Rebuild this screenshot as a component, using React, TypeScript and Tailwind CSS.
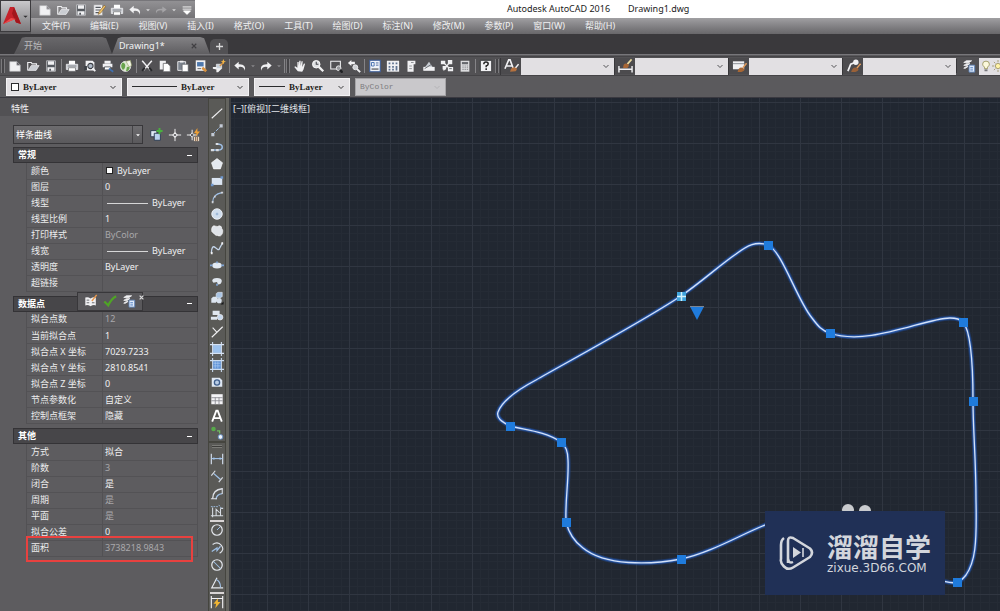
import React from "react";

const UI = "font-['Noto_Sans','Noto_Sans_CJK_SC',sans-serif]";

const W = "#f1f1f3";
const B = "#9fc0e6";
const O = "#d9923e";

const glyphs: Record<string, React.ReactNode> = {
  new: <path d="M2 3h8l4 4v7H2z M10 3v4h4" fill={W} stroke="#b9b9bd" strokeWidth=".7" />,
  open: (
    <>
      <path d="M2 13V4h4l1 1.500h5V7" fill="none" stroke={W} strokeWidth="1.300" />
      <path d="M2.500 13L6 7.500h9L11.500 13z" fill="#c9ccd2" stroke={W} strokeWidth=".8" />
    </>
  ),
  save: (
    <>
      <path d="M3 2h10v12H3z" fill="#55595f" stroke="#d9d9dc" strokeWidth=".8" />
      <path d="M4.500 2.500h7v4h-7z M4 9.500h8v4H4z" fill={W} />
      <path d="M6 11h2v2.500H6z" fill="#55595f" />
    </>
  ),
  saveas: (
    <>
      <path d="M2 2h10v12H2z" fill={W} stroke="#8d8d90" strokeWidth=".6" />
      <path d="M4 5h6M4 8h6M4 11h5" stroke="#55595f" strokeWidth="1.200" />
      <path d="M14 2.500L8 10l-1 3 3-1.500L15.500 4z" fill="#efc36a" stroke="#79531f" strokeWidth=".6" />
    </>
  ),
  print: (
    <>
      <path d="M4.500 2h7v4h-7z" fill="#fff" />
      <path d="M1.500 6h13v6h-13z" fill="#d4d7dc" stroke={W} strokeWidth=".8" />
      <path d="M4 10h8v4H4z" fill="#fff" stroke="#6b6b6f" strokeWidth=".8" />
      <path d="M3 8h10" stroke="#6b7077" />
    </>
  ),
  preview: (
    <>
      <path d="M3 2h8l2 2v9H3z" fill={W} />
      <circle cx="8.500" cy="8" r="3" fill="#aeb8c5" stroke="#3d4046" strokeWidth="1.200" />
      <path d="M11 10.500l3 3.500" stroke={W} strokeWidth="2" />
      <path d="M1.500 8h3v5h-3z" fill="#3d4046" />
    </>
  ),
  publish: (
    <>
      <path d="M4 2h7v3H4z M2 5.500h11v4H2z" fill={W} />
      <path d="M4 9h7v3.500H4z" fill="#fff" stroke="#55595f" />
      <path d="M9 11l5 3.500" stroke="#3f6fae" strokeWidth="2" />
    </>
  ),
  globe: (
    <>
      <circle cx="7.500" cy="8.500" r="5.800" fill="#dbe8cf" stroke={W} strokeWidth=".8" />
      <path d="M4 4q4 1 3 5t-3 3q-3-4 0-8z M9 9q4-1 3 2t-4 3z" fill="#68a34c" />
      <path d="M8 2.500l5-1 1.500 6-3 1.500z" fill="#f4f4ea" stroke="#83924d" strokeWidth=".6" />
    </>
  ),
  cut: (
    <>
      <path d="M2.500 2L12 13M13.500 2L4 13" stroke={W} strokeWidth="1.700" />
      <path d="M2.500 13.500l3-3.500M13.500 13.500l-3-3.500" stroke="#26272a" strokeWidth="2.200" />
    </>
  ),
  copy: (
    <>
      <path d="M2 2h7v10H2z" fill={W} />
      <path d="M6 5h5l3 3v6.500H6z" fill="#fff" stroke="#66666a" strokeWidth=".9" />
    </>
  ),
  paste: (
    <>
      <path d="M2 3h9v10H2z" fill="#7d848e" stroke={W} />
      <path d="M4.500 2h4v2h-4z" fill={W} />
      <path d="M7 6h7v8.500H7z" fill="#fff" stroke="#55595f" strokeWidth=".8" />
    </>
  ),
  match: (
    <>
      <path d="M2 1.500h11v12H2z" fill={W} />
      <path d="M3.500 3.500H11v5H3.500z" fill="#4d78ad" />
      <path d="M9.500 10l4.500 4" stroke={O} strokeWidth="3" />
      <path d="M4 11h4" stroke="#55595f" />
    </>
  ),
  block: (
    <>
      <path d="M1 9h7l3 2-4 4H5v-3L1 11z" fill={W} />
      <path d="M5 6h6v5H5z" fill="#c7d0db" stroke={W} strokeWidth=".8" />
      <path d="M9 8l4-4" stroke={O} strokeWidth="1.600" />
      <path d="M13 0l.9 2.200L16 3l-2.100.8L13 6l-.9-2.200L10 3l2.100-.8z" fill="#f2b646" />
    </>
  ),
  undo: <path d="M6.500 3L1.500 7.500 6.500 12V9q6-1 7 4.500Q15.500 5.500 6.500 6z" fill={W} />,
  redo: <path d="M9.500 3l5 4.500-5 4.500V9q-6-1-7 4.500Q.5 5.500 9.500 6z" fill={W} />,
  redoDim: <path d="M9.500 4l5 3.500-5 3.500V8.500q-6-1-7 3.500Q.5 6 9.500 6.500z" fill="#a5a4a7" />,
  hand: <path d="M5.500 14L1.500 9l1-.8L5 10V3.500h1.500V8l.7-6h1.500v6l1-5.500 1.400.2L10.500 9l2-4 1.300.5L12 12l-1.500 2.500z" fill={W} />,
  zoomTime: (
    <>
      <circle cx="6" cy="6" r="4.300" fill="#dfe1e4" stroke="#fff" />
      <path d="M6 3v3h2.500" stroke="#44464b" fill="none" strokeWidth="1.200" />
      <path d="M9 9l5 5" stroke={W} strokeWidth="2.600" />
    </>
  ),
  zoomWin: (
    <>
      <path d="M2 2.500h11v9H2z" fill="none" stroke={W} strokeWidth="1.200" />
      <circle cx="11" cy="10.500" r="2.700" fill="#9a9b9f" stroke={W} />
      <path d="M12.500 12.500l3 3" stroke="#1f2023" strokeWidth="2.800" />
    </>
  ),
  zoomPrev: (
    <>
      <path d="M1 4.500L5 1v2h4v3H5v2z" fill={W} />
      <circle cx="9.500" cy="9.500" r="2.800" fill="#cfd1d5" stroke={W} />
      <path d="M11.500 11.500l3.500 3.500" stroke={W} strokeWidth="2.200" />
    </>
  ),
  props: (
    <>
      <path d="M2 1.500h12v13H2z" fill="#f0f4fa" stroke="#3b5c99" strokeWidth="1.200" />
      <path d="M4 4h3v4H4z" fill="none" stroke="#3e69ad" />
      <path d="M9 4.500h3M9 7h3" stroke="#3b5c99" />
      <path d="M4 11.500h8" stroke="#5f6165" strokeWidth="1.500" />
    </>
  ),
  design: (
    <>
      <path d="M1 2h14v12.500H1z" fill={W} />
      <path d="M3 4h2v2H3zM7 4h2v2H7zM11 4h2v2h-2zM3 8h2v2H3zM3 11h2v2H3zM7 8h2v2H7zM7 11h2v2H7zM11 8h2v5h-2z" fill="#5f7391" />
    </>
  ),
  palettes: (
    <>
      <path d="M4 2h9v4H4zM4 6h7v8.500H4z" fill={W} />
      <path d="M8 4h3M6 8h3M6 11h3" stroke="#85878c" />
    </>
  ),
  sheet: (
    <>
      <path d="M1.500 12L8 3l6 9z" fill="#c8ccd2" />
      <path d="M1.500 9h13v4.500h-13z" fill={W} />
      <path d="M3 11l8-5" stroke="#606268" />
    </>
  ),
  markup: (
    <>
      <path d="M1 2h5v4H1zM9 1h5v5H9zM3 8h4v4H3zM9 9h6v5H9z" fill={W} />
      <path d="M10.500 11h3" stroke="#606268" />
      <path d="M5 5l5 5M10 5L4 13" stroke={W} strokeWidth="1.500" />
    </>
  ),
  calc: (
    <>
      <path d="M3 2h10v12.500H3z" fill="#dcdcde" />
      <path d="M4.500 3.500h7v2.500h-7z" fill="#66686d" />
      <path d="M5 8h1.500M7.500 8H9M10 8h1.500M5 10h1.500M7.500 10H9M10 10h1.500M5 12h1.500M7.500 12H9M10 12h1.500" stroke="#85878c" />
    </>
  ),
  help: (
    <>
      <path d="M1.500 1.500h13v13h-13z" fill={W} stroke="#303134" />
      <path d="M5.500 6q0-2.500 2.500-2.500T10.500 5.700Q10.500 7 8.200 8v1.500M8.200 10.500v2" fill="none" stroke="#222" strokeWidth="1.700" />
    </>
  ),
  textStyle: (
    <>
      <path d="M1 11L5 1.500h1.500L10 11M3 8h5.500" fill="none" stroke={W} strokeWidth="1.700" />
      <path d="M15.500 6l-4 5" stroke={W} strokeWidth="1.500" />
      <path d="M6.500 14q1-5 5-4.500t1 4z" fill="#b4713f" />
    </>
  ),
  dimStyle: (
    <>
      <path d="M1 8v7M15 8v7M1 11.500h14" stroke={W} strokeWidth="1.500" />
      <path d="M14.500 1L10 6" stroke="#e8d9a0" strokeWidth="1.800" />
      <path d="M5.500 10q0-5.500 4-4.500t.5 4.500z" fill="#a86735" />
    </>
  ),
  tableStyle: (
    <>
      <path d="M1 3h12v8.500H1z" fill={W} />
      <path d="M1 5.500h12" stroke="#8a8d93" />
      <path d="M15.500 5l-4 5" stroke="#e09a5c" strokeWidth="1.700" />
      <path d="M6 14.500q1-6 5.500-4.500T10 14.500z" fill="#a86735" />
    </>
  ),
  leaderStyle: (
    <>
      <path d="M2 13.500L5 6l5-2" fill="none" stroke={W} strokeWidth="1.800" />
      <circle cx="10.500" cy="4" r="2.900" fill={W} />
      <path d="M15.500 5.500l-4 5" stroke="#e09a5c" strokeWidth="1.600" />
      <path d="M5.500 14.500q1.500-6 6-4.500T10 14.500z" fill="#9a6138" />
    </>
  ),
  layers: (
    <>
      <path d="M2 4l3-2h6L8 4zM2 7.300l3-2h4l-3 2zM2 10.500l3-2h2l-3 2z" fill={W} stroke={W} strokeWidth=".9" />
      <path d="M8 7h6.500v8H8z" fill="#dfeafa" stroke="#5c80b5" />
      <path d="M9.500 10h3M9.500 12.500h3" stroke="#3b6fb9" />
    </>
  ),
  line: <path d="M2 14L14 3" stroke={W} strokeWidth="1.300" />,
  xline: (
    <>
      <path d="M3 13L13 3" stroke={B} strokeWidth="1.100" strokeDasharray="4 1.500" />
      <path d="M1.500 11.500h3.500V15H1.500zM11 1.500h3.500V5H11z" fill="#c3cad5" />
    </>
  ),
  pline: (
    <>
      <path d="M1.500 11.500H9M8 4.500q6 0 6 3.500t-4.500 3.500" fill="none" stroke={B} strokeWidth="1.700" />
      <path d="M1 10.300h3.500v2.500H1zM6.500 3.300h3v2.500h-3zM7 10.300h3v2.500H7z" fill="#d9dde3" />
    </>
  ),
  polygon: <path d="M8 1.800l6.300 4.800-2.400 7H4.100l-2.400-7z" fill="#e4e9ef" stroke="#fff" strokeWidth=".7" />,
  rect: (
    <>
      <path d="M2 4.500h12v8H2z" fill="#dbe5f1" />
      <path d="M1 11h3v3H1zM12 2.500h3v3h-3z" fill="#6f98ce" />
    </>
  ),
  arc: (
    <>
      <path d="M3 14Q3 5 13.500 3" fill="none" stroke={B} strokeWidth="1.300" />
      <path d="M2 12.500h2V15H2zM12.500 2H15v2h-2.500zM4.500 6.500h2v2h-2z" fill="#d0d4db" />
    </>
  ),
  circle: (
    <>
      <circle cx="8" cy="8" r="6" fill="#cfdded" stroke="#f3f6fa" />
      <path d="M6.500 8h3M8 6.500v3" stroke="#8aa9cf" />
    </>
  ),
  cloud: <path d="M2.500 3.500Q4 1 6.500 2.500q2 1 4-.5 3 0 3 3.500 1.500 1 1 4-.5 3-2.500 4-2 .5-3.500-.5-1.500.5-3-1T2 8.500q-.5-3 .5-5z" fill="#dfe3e8" stroke="#fff" strokeWidth=".7" />,
  spline: (
    <>
      <path d="M1.500 14Q2 4 6 7.500t4.500 2T14.500 2" fill="none" stroke="#c4d5ea" strokeWidth="1.500" />
      <path d="M1 12.500h2V15H1zM13 1.500h2V4h-2z" fill={W} />
    </>
  ),
  ellipse: (
    <>
      <ellipse cx="8" cy="8.500" rx="5.500" ry="3.400" fill="#e1e9f2" />
      <path d="M0 7.500h3v2H0zM13 7.500h3v2h-3zM7 4h2v2H7z" fill="#80a4d4" />
    </>
  ),
  ellArc: (
    <>
      <path d="M2.500 8q0-3.500 5.500-3.500t5.500 3.500Q13 12 9 12l-1-3-4 1z" fill="#dfe6ee" />
      <path d="M7 11h2v2.500H7z" fill="#7ba2d3" />
    </>
  ),
  insert: (
    <>
      <path d="M1.500 8.500l2-2h5v5l-2 2h-5z" fill="#dce5ef" />
      <path d="M7 3l2-1.500h5V6l-2 2H7z" fill="#a9c4e3" stroke={W} strokeWidth=".6" />
      <circle cx="10.500" cy="11" r="2.900" fill="#d8e1ec" />
      <path d="M12 15.500h3.500V12z" fill="#17181a" />
    </>
  ),
  makeBlock: (
    <>
      <path d="M3 3h8v5H3zM1 10h7v3.500H1z" fill="#dfe6ee" />
      <circle cx="11.500" cy="10.500" r="3.200" fill="#c5d7ec" stroke={W} strokeWidth=".8" />
    </>
  ),
  point: <path d="M3 3l5 5.500M14.500 2L2 14" fill="none" stroke={W} strokeWidth="1.200" />,
  hatch: (
    <>
      <path d="M3.500 3.500h9v9h-9z" fill="#9cc2ee" />
      <path d="M3 0v16M13 0v16M0 3h16M0 13h16" stroke="#d6e3f4" strokeWidth="1.200" />
    </>
  ),
  gradient: (
    <>
      <path d="M3.500 3.500h9v9h-9z" fill="#5e93d8" />
      <path d="M3 0v16M13 0v16M0 3h16M0 13h16" stroke="#c9dbf0" strokeWidth="1.200" />
      <path d="M6 4v8M9 4v8M4 6h8M4 9h8" stroke="#b2cff2" strokeWidth=".7" />
    </>
  ),
  region: (
    <>
      <path d="M2 3h9l3 3v7.500H2z" fill="#dfe8f3" />
      <circle cx="8" cy="8.500" r="3" fill="#b9cde6" stroke="#3f5f8c" strokeWidth="1.500" />
    </>
  ),
  table: (
    <>
      <path d="M1.500 2.500h13v11.500h-13z" fill="#f3f3f5" />
      <path d="M1.500 6.500h13M1.500 10h13M6 6v8M10.300 6v8" stroke="#8b8d92" />
    </>
  ),
  mtext: <path d="M2.500 14.500L7.200 2h1.600L13.500 14.500M4.500 10.500h7" fill="none" stroke="#fff" strokeWidth="2.100" />,
  addSel: (
    <>
      <circle cx="4" cy="3.500" r="2.600" fill="#57a94a" />
      <path d="M8 5.500h3v3" fill="none" stroke="#70b861" strokeWidth="1.500" />
      <circle cx="12" cy="12.500" r="2.700" fill="#eef3fa" stroke="#5b86bf" />
    </>
  ),
  dimLin: (
    <>
      <path d="M1.500 2v12M14.500 2v12" stroke="#d5e0ee" strokeWidth="1.300" />
      <path d="M2 7.500h12" stroke={B} strokeWidth="1.300" />
      <path d="M2 7.500l3-1.500v3zM14 7.500l-3-1.500v3z" fill={B} />
    </>
  ),
  dimAli: (
    <>
      <path d="M4 5l8 7" stroke={B} strokeWidth="1.500" />
      <path d="M1.500 7.500L6 2M10 15l4.500-5.500" stroke="#d9dde3" strokeWidth="1.300" />
    </>
  ),
  dimArc: (
    <>
      <path d="M3 13.500Q3 3 14 2" fill="none" stroke="#dde1e7" strokeWidth="1.500" />
      <path d="M7 14q0-5.500 7-6.500" fill="none" stroke={B} strokeWidth="1.500" />
      <path d="M1 13.500h7M14 1v7" stroke="#dde1e7" strokeWidth="1.200" />
    </>
  ),
  dimOrd: (
    <>
      <path d="M3 4v11M1 13.500h14M7 13V6l4 4M12 5v8M12 5h3" fill="none" stroke="#d8dde4" strokeWidth="1.200" />
      <path d="M1 3h8M10 1l3 4" fill="none" stroke={B} strokeDasharray="2 1" />
    </>
  ),
  dimRad: (
    <>
      <circle cx="8" cy="8" r="6" fill="none" stroke="#e4e7ec" strokeWidth="1.400" />
      <path d="M8 8l3.500-3.500" stroke={B} strokeWidth="1.100" />
    </>
  ),
  dimJog: (
    <>
      <path d="M3 4q6-4 10 1t-2 9" fill="none" stroke="#e1e5eb" strokeWidth="1.300" />
      <path d="M2 12l6-4v3l4-5" fill="none" stroke={B} strokeWidth="1.400" />
    </>
  ),
  dimDia: (
    <>
      <circle cx="8" cy="8" r="6" fill="none" stroke="#e4e7ec" strokeWidth="1.400" />
      <path d="M4 4l8 8" stroke={B} strokeWidth="1.200" />
    </>
  ),
  dimAng: (
    <>
      <path d="M8 2L2 13.500h13" fill="none" stroke="#e4e7ec" strokeWidth="1.400" />
      <path d="M7 4q5 2 5 9" fill="none" stroke={B} strokeWidth="1.400" />
    </>
  ),
  dimQuick: (
    <>
      <path d="M1.500 1v14M14.500 1v14M2 4h12" stroke={W} strokeWidth="1.300" />
      <path d="M9 4L4 10h3l-1 5 6-7H9z" fill="#f2b632" />
    </>
  ),
  pickAdd: (
    <>
      <path d="M2 3h7v7H2z" fill="#dfe9f5" stroke="#26364d" />
      <path d="M6 6h7v8H6z" fill="#b9d2ef" stroke="#26364d" />
      <path d="M12 0v7M8.500 3.500h7" stroke="#49b13e" strokeWidth="2.200" />
    </>
  ),
  pick: (
    <>
      <path d="M8 1v14M1 8h14" stroke={W} strokeWidth="1.100" />
      <path d="M5.500 8L8 5.500 10.500 8 8 10.500z" fill="#5d5c5f" stroke={W} strokeWidth="1.200" />
    </>
  ),
  quickSel: (
    <>
      <path d="M7 2v12M1 8h12" stroke={W} strokeWidth="1.100" />
      <path d="M4.500 8L7 5.500 9.500 8 7 10.500z" fill="#5d5c5f" stroke={W} />
      <path d="M13 0L9 6h3l-1 4 5-6h-3z" fill="#f1a033" />
      <path d="M9 10h6v5H9z" fill="#e9d8c4" />
      <path d="M11 10v5M13 10v5" stroke="#77553a" />
    </>
  ),
  book: (
    <>
      <path d="M1.500 4q3-1 6 1v9q-3-2-6-1zM7.500 5q3-2 6-1v9q-3-1-6 1z" fill={W} />
      <path d="M3 7h3M3 10h3M9 10h3" stroke="#5a5c61" />
      <path d="M14.500 1L9 8" stroke="#e8984e" strokeWidth="1.700" />
    </>
  ),
  check: <path d="M1.500 8.500L6 13q3-7 9-10.500" fill="none" stroke="#4fa426" strokeWidth="2.500" />,
  chev: <path d="M3 6l5 5 5-5" fill="none" stroke="currentColor" strokeWidth="1.700" />,
  drop: <path d="M3 6h10l-5 5z" fill="currentColor" />,
  bars: <path d="M3 4.500h10M3 7h10M4 9h8l-4 4z" fill="#fff" stroke="#fff" strokeWidth="1" />,
  bulb: (
    <>
      <path d="M8 1.500q4.500 0 4.500 4 0 2-2.500 4v2H6v-2q-2.500-2-2.500-4 0-4 4.500-4z" fill="#fbf9dc" stroke="#8f8a4d" />
      <path d="M6 12.500h4v2.500H6z" fill="#77777b" />
    </>
  ),
  sun: (
    <>
      <circle cx="8" cy="8" r="3.500" fill="#fff3a8" stroke="#94895a" />
      <path d="M8 0v3M8 13v3M0 8h3M13 8h3M2.500 2.500l2 2M13.500 2.500l-2 2M2.500 13.500l2-2M13.500 13.500l-2-2" stroke="#94895a" />
    </>
  ),
};

function Glyph({ name, className = "size-[14px]" }: { name: string; className?: string }) {
  return (
    <svg viewBox="0 0 16 16" className={`shrink-0 ${className}`} aria-hidden="true">
      {glyphs[name]}
    </svg>
  );
}

function Tool({ name }: { name: string }) {
  return (
    <button type="button" aria-label={name} className="flex h-4 w-[18px] shrink-0 items-center justify-center">
      <Glyph name={name} />
    </button>
  );
}

function Drop({ dim }: { dim?: boolean }) {
  return (
    <button
      type="button"
      aria-label="more"
      className={`flex h-4 w-2 shrink-0 items-center justify-center ${dim ? "text-[#88878a]" : "text-[#d8d8da]"}`}
    >
      <Glyph name="drop" className="size-[6px]" />
    </button>
  );
}

const Sep = () => <span className="mx-px h-[14px] w-px shrink-0 bg-[#858487]" />;

function Grip() {
  return <span className="mr-px h-[14px] w-1 shrink-0 border-x border-[#7b7a7d] bg-[#454447]" />;
}

const menus = [
  "文件(F)", "编辑(E)", "视图(V)", "插入(I)", "格式(O)", "工具(T)",
  "绘图(D)", "标注(N)", "修改(M)", "参数(P)", "窗口(W)", "帮助(H)",
];

function Header() {
  return (
    <header className="flex h-[34px] shrink-0">
      <button
        type="button"
        aria-label="应用程序"
        className="flex h-8 w-[31px] shrink-0 items-center justify-center border border-[#3c3b3e] bg-linear-to-b from-[#c9c8cb] to-[#7c7b7e] text-[#2f2e31]"
      >
        <svg viewBox="0 0 20 22" className="h-[22px] w-5" aria-hidden="true">
          <path d="M1 19L8 2h4l7 17-5-1.500L12.500 14 6 17z" fill="#c5222a" />
          <path d="M12 2l7 17-5-1.500-4-9z" fill="#a3161c" />
          <path d="M1 19l8-6 5 1-8 3z" fill="#ee4b4b" />
        </svg>
        <Glyph name="drop" className="size-[7px]" />
      </button>
      <div className="flex min-w-0 flex-1 flex-col">
        <div className="flex h-[18px] bg-white">
          <div className="flex w-[164px] shrink-0 items-center border-t border-[#77767a] bg-linear-to-b from-[#929194] to-[#747376] pl-[5px]">
            <Tool name="new" />
            <Tool name="open" />
            <Tool name="save" />
            <Tool name="saveas" />
            <Tool name="print" />
            <Tool name="undo" />
            <Drop />
            <Tool name="redoDim" />
            <Drop />
            <Tool name="bars" />
          </div>
          <h1 className="flex flex-1 items-center gap-[18px] pl-[312px] text-[9px] whitespace-nowrap text-[#1b1b1b]">
            <span>Autodesk AutoCAD 2016</span>
            <span>Drawing1.dwg</span>
          </h1>
        </div>
        <nav className="flex h-4 items-center gap-5 bg-linear-to-b from-[#a09fa2] to-[#68676a] pl-[11px] text-[9px] whitespace-nowrap text-[#f0f0f1]">
          {menus.map((m) => (
            <button key={m} type="button">
              {m}
            </button>
          ))}
        </nav>
      </div>
    </header>
  );
}

function Tabs() {
  return (
    <div className="flex h-5 shrink-0 items-end bg-[#3a393c] pl-[14px] text-[9px]">
      <button
        type="button"
        className="h-[17px] w-[98px] bg-linear-to-b from-[#69686b] to-[#555457] pl-[10px] text-left text-[#b9b9bb] [clip-path:polygon(0_100%,4%_55%,8%_5%,12%_0,90%_0,94%_8%,100%_100%)]"
      >
        开始
      </button>
      <div className="flex h-[17px] w-[98px] items-center justify-between bg-linear-to-b from-[#838285] to-[#5f5e61] pr-[13px] pl-[7px] text-[#f4f4f5] [clip-path:polygon(0_100%,6%_8%,10%_0,90%_0,94%_8%,100%_100%)]">
        <button type="button">Drawing1*</button>
        <button type="button" aria-label="关闭" className="text-[#403f42]">
          <svg viewBox="0 0 8 8" className="size-[6px]" aria-hidden="true">
            <path d="M1 1l6 6M7 1L1 7" stroke="currentColor" strokeWidth="1.500" />
          </svg>
        </button>
      </div>
      <button
        type="button"
        aria-label="新建"
        className="flex h-[15px] w-[18px] items-center justify-center rounded-t-[5px] bg-[#525154] text-[#d8d8d9]"
      >
        <svg viewBox="0 0 8 8" className="size-[7px]" aria-hidden="true">
          <path d="M4 0v8M0 4h8" stroke="currentColor" strokeWidth="1.500" />
        </svg>
      </button>
    </div>
  );
}

function StyleCombo({ icon, label }: { icon: string; label: string }) {
  return (
    <div className="flex w-[114px] shrink-0 items-center border-l border-[#38373a]">
      <span className="flex w-5 items-center justify-center bg-[#4c4b4e]">
        <Glyph name={icon} className="h-4 w-[15px]" />
      </span>
      <span className="flex h-[17px] flex-1 items-center bg-[#e2e0e3] pr-1 text-[#3b3b3d]">
        <select className="w-full min-w-0 appearance-none bg-transparent outline-none" aria-label={label} />
        <Glyph name="chev" className="size-2" />
      </span>
    </div>
  );
}

function LayerCombo({
  label, value, width, sample, dim,
}: { label: string; value: string; width: string; sample?: React.ReactNode; dim?: boolean }) {
  return (
    <div
      className={`flex h-[18px] shrink-0 items-center gap-1 border px-1 ${width} ${
        dim ? "border-[#a6a5a8] bg-[#c9c8cb] text-[#7d7c7f]" : "border-[#f3f2f4] bg-[#e2e0e3] text-[#1e1e20]"
      }`}
    >
      {sample}
      <select
        aria-label={label}
        disabled={dim}
        className={`h-4 min-w-0 flex-1 appearance-none bg-transparent leading-4 opacity-100 outline-none ${
          dim ? "font-['Liberation_Mono',monospace] text-[8px]" : "font-['Liberation_Serif',serif] text-[9px] font-bold"
        }`}
      >
        <option>{value}</option>
      </select>
      <Glyph name="chev" className={dim ? "size-2 opacity-30" : "size-2"} />
    </div>
  );
}

function Toolbars() {
  return (
    <div className="flex shrink-0 flex-col overflow-hidden border-t border-[#77767a] bg-[#5b5a5d] pt-px">
      <div className="flex h-5 items-center border-y border-[#454447] bg-[#525154] pl-px">
        <Grip />
        <Tool name="new" /><Tool name="open" /><Tool name="save" />
        <Sep />
        <Tool name="print" /><Tool name="preview" /><Tool name="publish" /><Tool name="globe" />
        <Sep />
        <Tool name="cut" /><Tool name="copy" /><Tool name="paste" /><Tool name="match" /><Tool name="block" />
        <Sep />
        <Tool name="undo" /><Drop dim /><Tool name="redo" /><Drop dim />
        <Sep /><Grip />
        <Tool name="hand" /><Tool name="zoomTime" /><Tool name="zoomWin" /><Tool name="zoomPrev" />
        <Sep />
        <Tool name="props" /><Tool name="design" /><Tool name="palettes" /><Tool name="sheet" />
        <Tool name="markup" /><Tool name="calc" />
        <Sep />
        <Tool name="help" />
        <Grip />
        <StyleCombo icon="textStyle" label="文字样式" />
        <StyleCombo icon="dimStyle" label="标注样式" />
        <StyleCombo icon="tableStyle" label="表格样式" />
        <StyleCombo icon="leaderStyle" label="多重引线样式" />
        <span className="flex w-[23px] shrink-0 items-center justify-end border-l border-[#38373a] pr-[3px]">
          <Glyph name="layers" />
        </span>
        <span className="flex h-[17px] min-w-5 flex-1 items-center overflow-hidden bg-[#e2e0e3] pl-px">
          <Glyph name="bulb" className="size-3" />
          <Glyph name="sun" className="size-3" />
        </span>
      </div>
      <div className="flex h-[22px] items-center gap-[5px] border-b border-[#3a3940] pl-[6px]">
        <LayerCombo
          label="颜色"
          value="ByLayer"
          width="w-[116px]"
          sample={<span className="size-2 shrink-0 border border-[#2b2b2d] bg-white" />}
        />
        <LayerCombo
          label="线型"
          value="ByLayer"
          width="w-[122px]"
          sample={<span className="h-px w-[45px] shrink-0 bg-[#2b2b2d]" />}
        />
        <LayerCombo
          label="线宽"
          value="ByLayer"
          width="w-[96px]"
          sample={<span className="h-px w-[26px] shrink-0 bg-[#2b2b2d]" />}
        />
        <LayerCombo label="打印样式" value="ByColor" width="w-[91px]" dim />
      </div>
    </div>
  );
}

type Row = { k: string; v: string; dim?: boolean; swatch?: boolean; rule?: boolean };

const general: Row[] = [
  { k: "颜色", v: "ByLayer", swatch: true },
  { k: "图层", v: "0" },
  { k: "线型", v: "ByLayer", rule: true },
  { k: "线型比例", v: "1" },
  { k: "打印样式", v: "ByColor", dim: true },
  { k: "线宽", v: "ByLayer", rule: true },
  { k: "透明度", v: "ByLayer" },
  { k: "超链接", v: "" },
];

const points: Row[] = [
  { k: "拟合点数", v: "12", dim: true },
  { k: "当前拟合点", v: "1" },
  { k: "拟合点 X 坐标", v: "7029.7233" },
  { k: "拟合点 Y 坐标", v: "2810.8541" },
  { k: "拟合点 Z 坐标", v: "0" },
  { k: "节点参数化", v: "自定义" },
  { k: "控制点框架", v: "隐藏" },
];

const misc: Row[] = [
  { k: "方式", v: "拟合" },
  { k: "阶数", v: "3", dim: true },
  { k: "闭合", v: "是" },
  { k: "周期", v: "是", dim: true },
  { k: "平面", v: "是", dim: true },
  { k: "拟合公差", v: "0" },
  { k: "面积", v: "3738218.9843", dim: true },
];

function Section({ title, rows, children }: { title: string; rows: Row[]; children?: React.ReactNode }) {
  return (
    <section className="relative mb-1">
      <button
        type="button"
        className="flex h-4 w-full items-center justify-between border border-[#343336] bg-[#474649] px-1 text-[9px] font-bold text-white"
      >
        <span>{title}</span>
        <span className="mr-px h-px w-[5px] bg-white" />
      </button>
      <table className="ml-[13px] w-[172px] table-fixed border-collapse text-[9px] leading-3">
        <tbody>
          {rows.map((r) => (
            <tr key={r.k} className="h-4 border-b border-[#535255]">
              <th scope="row" className="w-[76px] border-x border-[#525154] p-0 pl-1 text-left font-normal whitespace-nowrap text-[#ececed]">
                {r.k}
              </th>
              <td className={`border-r border-[#525154] p-0 pl-[2px] ${r.dim ? "text-[#a9a8ab]" : "text-[#f0f0f1]"}`}>
                <span className="flex items-center gap-1">
                  {r.swatch && <span className="ml-px size-[7px] border border-[#222] bg-white" />}
                  {r.rule && <span className="ml-[2px] h-px w-[41px] bg-[#d6d6d7]" />}
                  {r.v}
                </span>
              </td>
            </tr>
          ))}
        </tbody>
      </table>
      {children}
    </section>
  );
}

function Palette() {
  return (
    <aside className="flex w-[208px] shrink-0 flex-col bg-[#5d5c5f]">
      <h2 className="flex h-[18px] shrink-0 items-center bg-[#525154] pt-[3px] pl-[11px] text-[9px] text-[#f0f0f1]">特性</h2>
      <div className="flex flex-col pt-[9px] pr-[10px] pl-[13px]">
        <div className="mb-[3px] flex h-[19px] items-center">
          <div className="flex h-[19px] w-[130px] shrink-0 items-center border border-[#38373a] bg-linear-to-b from-[#6d6c6f] to-[#5a595c] text-white">
            <select
              aria-label="对象类型"
              className="h-[17px] min-w-0 flex-1 appearance-none bg-transparent pl-[2px] text-[9px] leading-[17px] outline-none"
            >
              <option>样条曲线</option>
            </select>
            <span className="flex h-full w-[10px] items-center justify-center border-l border-[#454447]">
              <Glyph name="drop" className="size-[6px]" />
            </span>
          </div>
          <span className="-mr-1 flex flex-1 items-center justify-between pl-1">
            <Tool name="pickAdd" />
            <Tool name="pick" />
            <Tool name="quickSel" />
          </span>
        </div>
        <Section title="常规" rows={general} />
        <Section title="数据点" rows={points}>
          <div className="absolute -top-1 left-16 flex h-[19px] w-[66px] items-center gap-px border border-[#38373a] bg-[#59585b] pl-1">
            <Tool name="book" />
            <Tool name="check" />
            <Tool name="layers" />
            <button type="button" aria-label="关闭" className="self-start pt-[2px] text-[#dcdcdd]">
              <svg viewBox="0 0 8 8" className="size-[5px]" aria-hidden="true">
                <path d="M1 1l6 6M7 1L1 7" stroke="currentColor" strokeWidth="2" />
              </svg>
            </button>
          </div>
        </Section>
        <Section title="其他" rows={misc}>
          <div className="pointer-events-none absolute right-[5px] -bottom-[5px] left-[13px] h-[26px] border-2 border-[#e8413f]" />
        </Section>
      </div>
    </aside>
  );
}

const drawTools = [
  "line", "xline", "pline", "polygon", "rect", "arc", "circle", "cloud", "spline", "ellipse",
  "ellArc", "insert", "makeBlock", "point", "hatch", "gradient", "region", "table", "mtext", "addSel",
];

function SideTool({ name }: { name: string }) {
  return (
    <button type="button" aria-label={name} className="flex min-h-0 flex-1 items-center justify-center">
      <Glyph name={name} />
    </button>
  );
}

function DrawStrip() {
  return (
    <div className="flex w-[23px] shrink-0 flex-col overflow-hidden border-r-2 border-[#3d3f42] bg-[#64645f] pr-[3px]">
      <div className="flex h-[344px] shrink-0 flex-col border border-[#45453f] bg-[#5a5a57] pt-[6px]">
        {drawTools.map((t) => (
          <SideTool key={t} name={t} />
        ))}
      </div>
      <div className="flex h-[170px] shrink-0 flex-col border border-[#45453f] bg-[#5a5a57]">
        <span className="mx-[3px] my-[2px] h-[3px] border-y border-[#7b7b77] bg-[#3d3d3b]" />
        {["dimLin", "dimAli", "dimArc", "dimOrd"].map((t) => (
          <SideTool key={t} name={t} />
        ))}
        <span className="mx-px h-[2px] bg-[#d9d5d5]" />
        {["dimRad", "dimJog", "dimDia", "dimAng"].map((t) => (
          <SideTool key={t} name={t} />
        ))}
        <span className="mx-px h-[2px] bg-[#d9d5d5]" />
        <SideTool name="dimQuick" />
      </div>
    </div>
  );
}

const outline =
  "M450 198C469 185 489 167 505 156C517 147 525 143 537 147C551 153 566 202 581 220C587 228 591 233 599 235C637 249 694 220 719 220C726 220 729 221 732 224C739 232 742 257 742 303C742 332 745 362 745 402C746 447 744 464 735 477C731 482 729 484 726 484C722 486 716 484 712 483C700 470 640 405 534 427C509 437 479 455 450 461C419 467 374 468 352 450C341 442 337 432 335 424C334 402 338 382 337 362C337 354 335 348 330 344C314 333 294 332 279 328C271 324 265 320 267 314C271 303 288 291 305 282C329 268 409 225 450 198Z";

const grips = [
  [537, 147], [599, 235], [732, 224], [742, 303], [726, 484], [450, 461], [335, 424], [330, 344], [279, 328],
];

function Canvas() {
  return (
    <main className="relative min-w-0 flex-1 overflow-hidden bg-[#212731]">
      <svg className="absolute inset-0 h-full w-full" aria-label="图形">
        <defs>
          <pattern id="grid" x="-5" y="4" width="41" height="41" patternUnits="userSpaceOnUse">
            <path
              d="M8.500 0v41M16.500 0v41M25.500 0v41M33.500 0v41M0 8.500h41M0 16.500h41M0 25.500h41M0 33.500h41"
              stroke="#252b35"
            />
            <path d="M.5 0v41M0 .5h41" stroke="#303641" />
          </pattern>
        </defs>
        <rect width="100%" height="100%" fill="url(#grid)" />
        <path d={outline} fill="none" stroke="#1c4da3" strokeOpacity=".45" strokeWidth="5" />
        <path d={outline} fill="none" stroke="#2f6bd0" strokeOpacity=".6" strokeWidth="3" />
        <path d={outline} fill="none" stroke="#d3e1f8" strokeWidth="1.300" />
        {grips.map(([x, y]) => (
          <rect key={`${x}-${y}`} x={x - 4} y={y - 4} width="9" height="9" fill="#1f7bdc" />
        ))}
        <rect x="446" y="194" width="9" height="9" fill="#3fa3dc" />
        <path d="M450.500 194v9M446 198.500h9" stroke="#d2f1fb" strokeWidth="1.500" />
        <path d="M459 208.500h14l-7 13.500z" fill="#1f7bdc" />
        <path d="M459 208.500h14" stroke="#7b8594" />
        <circle cx="617" cy="412" r="6" fill="#c9cbce" />
        <circle cx="634" cy="413" r="6" fill="#c9cbce" />
      </svg>
      <p className="relative pt-1 pl-[2px] text-[9px] leading-[14px] text-[#e2e5e9]">[−][俯视][二维线框]</p>
      <div className="absolute right-[55px] bottom-4 flex h-[84px] w-[180px] items-center gap-3 bg-[#203056] pl-[14px] text-[#d3d6dc]">
        <svg viewBox="0 0 36 38" className="h-[38px] w-9 shrink-0" aria-hidden="true">
          <path
            d="M9 29V7q0-5 5-3l17 10.500q4 4 0 8.500L14 33.500q-5 3-9-1T2 25V11q0-5 3-7"
            fill="none"
            stroke="currentColor"
            strokeWidth="2.600"
            strokeLinejoin="round"
          />
          <path d="M9 25q1 5 5 3" fill="none" stroke="currentColor" strokeWidth="2.400" />
          <path d="M14 13l8 5.500-8 5.500z" fill="currentColor" />
          <path d="M24 14v9" stroke="currentColor" strokeWidth="1.600" />
        </svg>
        <div className="flex flex-col gap-px whitespace-nowrap">
          <strong className="font-['Noto_Sans_CJK_SC',sans-serif] text-[26px] leading-7 font-bold">溜溜自学</strong>
          <span className="font-['DejaVu_Sans',sans-serif] text-[12px] leading-[14px]">zixue.3D66.COM</span>
        </div>
      </div>
    </main>
  );
}

export default function App() {
  return (
    <div className={`flex h-screen flex-col overflow-hidden bg-[#5b5a5d] ${UI}`}>
      <Header />
      <Tabs />
      <Toolbars />
      <div className="flex min-h-0 flex-1">
        <Palette />
        <DrawStrip />
        <Canvas />
      </div>
    </div>
  );
}
